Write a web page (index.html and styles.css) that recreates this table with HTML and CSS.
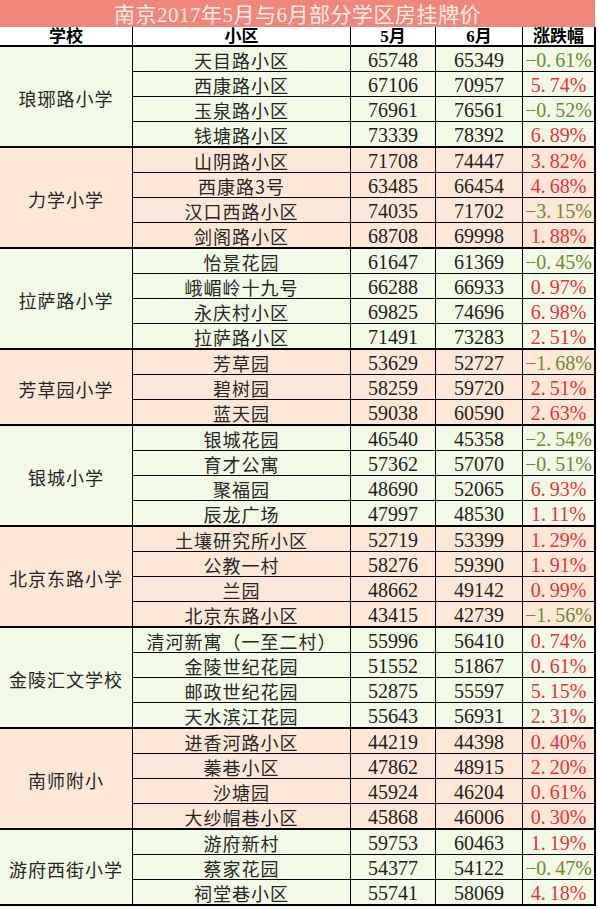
FILE: index.html
```html
<!DOCTYPE html>
<html lang="zh-CN">
<head>
<meta charset="utf-8">
<title>南京2017年5月与6月部分学区房挂牌价</title>
<link rel="stylesheet" href="styles.css">
</head>
<body>
<div class="sheet">
  <div class="title">南京2017年5月与6月部分学区房挂牌价</div>
  <div class="hd">学校</div><div class="hd">小区</div><div class="hd">5月</div><div class="hd">6月</div><div class="hd">涨跌幅</div>

  <section class="grp green">
    <div class="school">琅琊路小学</div>
    <div class="row"><span class="area">天目路小区</span><span>65748</span><span>65349</span><span class="pct dn">−0<i>.</i>61%</span></div>
    <div class="row"><span class="area">西康路小区</span><span>67106</span><span>70957</span><span class="pct up">5<i>.</i>74%</span></div>
    <div class="row"><span class="area">玉泉路小区</span><span>76961</span><span>76561</span><span class="pct dn">−0<i>.</i>52%</span></div>
    <div class="row"><span class="area">钱塘路小区</span><span>73339</span><span>78392</span><span class="pct up">6<i>.</i>89%</span></div>
  </section>

  <section class="grp peach">
    <div class="school">力学小学</div>
    <div class="row"><span class="area">山阴路小区</span><span>71708</span><span>74447</span><span class="pct up">3<i>.</i>82%</span></div>
    <div class="row"><span class="area">西康路3号</span><span>63485</span><span>66454</span><span class="pct up">4<i>.</i>68%</span></div>
    <div class="row"><span class="area">汉口西路小区</span><span>74035</span><span>71702</span><span class="pct dn">−3<i>.</i>15%</span></div>
    <div class="row"><span class="area">剑阁路小区</span><span>68708</span><span>69998</span><span class="pct up">1<i>.</i>88%</span></div>
  </section>

  <section class="grp green">
    <div class="school">拉萨路小学</div>
    <div class="row"><span class="area">怡景花园</span><span>61647</span><span>61369</span><span class="pct dn">−0<i>.</i>45%</span></div>
    <div class="row"><span class="area">峨嵋岭十九号</span><span>66288</span><span>66933</span><span class="pct up">0<i>.</i>97%</span></div>
    <div class="row"><span class="area">永庆村小区</span><span>69825</span><span>74696</span><span class="pct up">6<i>.</i>98%</span></div>
    <div class="row"><span class="area">拉萨路小区</span><span>71491</span><span>73283</span><span class="pct up">2<i>.</i>51%</span></div>
  </section>

  <section class="grp peach three">
    <div class="school">芳草园小学</div>
    <div class="row"><span class="area">芳草园</span><span>53629</span><span>52727</span><span class="pct dn">−1<i>.</i>68%</span></div>
    <div class="row"><span class="area">碧树园</span><span>58259</span><span>59720</span><span class="pct up">2<i>.</i>51%</span></div>
    <div class="row"><span class="area">蓝天园</span><span>59038</span><span>60590</span><span class="pct up">2<i>.</i>63%</span></div>
  </section>

  <section class="grp green">
    <div class="school">银城小学</div>
    <div class="row"><span class="area">银城花园</span><span>46540</span><span>45358</span><span class="pct dn">−2<i>.</i>54%</span></div>
    <div class="row"><span class="area">育才公寓</span><span>57362</span><span>57070</span><span class="pct dn">−0<i>.</i>51%</span></div>
    <div class="row"><span class="area">聚福园</span><span>48690</span><span>52065</span><span class="pct up">6<i>.</i>93%</span></div>
    <div class="row"><span class="area">辰龙广场</span><span>47997</span><span>48530</span><span class="pct up">1<i>.</i>11%</span></div>
  </section>

  <section class="grp peach">
    <div class="school">北京东路小学</div>
    <div class="row"><span class="area">土壤研究所小区</span><span>52719</span><span>53399</span><span class="pct up">1<i>.</i>29%</span></div>
    <div class="row"><span class="area">公教一村</span><span>58276</span><span>59390</span><span class="pct up">1<i>.</i>91%</span></div>
    <div class="row"><span class="area">兰园</span><span>48662</span><span>49142</span><span class="pct up">0<i>.</i>99%</span></div>
    <div class="row"><span class="area">北京东路小区</span><span>43415</span><span>42739</span><span class="pct dn">−1<i>.</i>56%</span></div>
  </section>

  <section class="grp green">
    <div class="school">金陵汇文学校</div>
    <div class="row"><span class="area">清河新寓（一至二村）</span><span>55996</span><span>56410</span><span class="pct up">0<i>.</i>74%</span></div>
    <div class="row"><span class="area">金陵世纪花园</span><span>51552</span><span>51867</span><span class="pct up">0<i>.</i>61%</span></div>
    <div class="row"><span class="area">邮政世纪花园</span><span>52875</span><span>55597</span><span class="pct up">5<i>.</i>15%</span></div>
    <div class="row"><span class="area">天水滨江花园</span><span>55643</span><span>56931</span><span class="pct up">2<i>.</i>31%</span></div>
  </section>

  <section class="grp peach">
    <div class="school">南师附小</div>
    <div class="row"><span class="area">进香河路小区</span><span>44219</span><span>44398</span><span class="pct up">0<i>.</i>40%</span></div>
    <div class="row"><span class="area">蓁巷小区</span><span>47862</span><span>48915</span><span class="pct up">2<i>.</i>20%</span></div>
    <div class="row"><span class="area">沙塘园</span><span>45924</span><span>46204</span><span class="pct up">0<i>.</i>61%</span></div>
    <div class="row"><span class="area">大纱帽巷小区</span><span>45868</span><span>46006</span><span class="pct up">0<i>.</i>30%</span></div>
  </section>

  <section class="grp green three">
    <div class="school">游府西街小学</div>
    <div class="row"><span class="area">游府新村</span><span>59753</span><span>60463</span><span class="pct up">1<i>.</i>19%</span></div>
    <div class="row"><span class="area">蔡家花园</span><span>54377</span><span>54122</span><span class="pct dn">−0<i>.</i>47%</span></div>
    <div class="row"><span class="area">祠堂巷小区</span><span>55741</span><span>58069</span><span class="pct up">4<i>.</i>18%</span></div>
  </section>
</div>
</body>
</html>
```

FILE: styles.css
```css
* {
  box-sizing: border-box;
  margin: 0;
  padding: 0;
}

body {
  background: #ffffff;
  color: #1e1e1e;
  font-family: "Liberation Serif", "Noto Sans CJK SC", serif;
}

.sheet {
  display: grid;
  grid-template-columns: 133px 218px 85px 87px 73px;
  width: 596px;
}

.title {
  grid-column: 1 / -1;
  height: 27px;
  margin-right: 1px;
  padding-top: 4px;
  background: #f1867a;
  color: #fdeeea;
  font-size: 21px;
  line-height: 23px;
  letter-spacing: 0.5px;
  text-align: center;
}

.hd {
  height: 20px;
  padding-top: 1px;
  background: #ffffff;
  border-right: 1px solid #000;
  border-bottom: 2px solid #000;
  color: #000;
  font-size: 17px;
  font-weight: 700;
  line-height: 17px;
  text-align: center;
}

.hd:last-child,
.hd:nth-child(6) {
  border-right-width: 2px;
}

.grp,
.row {
  display: contents;
}

.school {
  grid-column: 1;
  grid-row: span 4;
  display: flex;
  align-items: center;
  justify-content: center;
  padding-top: 3px;
  border-right: 1px solid #000;
  border-bottom: 2px solid #000;
  font-family: "Noto Sans CJK SC", sans-serif;
  font-size: 18px;
  letter-spacing: 1px;
  color: #262626;
}

.three .school {
  grid-row: span 3;
}

.row > span {
  display: block;
  height: 25px;
  padding-top: 2px;
  border-right: 1px solid #000;
  border-bottom: 1px solid #000;
  font-size: 20px;
  line-height: 22px;
  text-align: center;
  white-space: nowrap;
}

.row:last-child > span {
  height: 26px;
  border-bottom-width: 2px;
}

.row > span:last-child {
  border-right-width: 2px;
}

.row > .area {
  font-family: "Noto Sans CJK SC", sans-serif;
  font-size: 18px;
  letter-spacing: 1px;
  color: #262626;
}

.green .school,
.green .row > span {
  background: #f3f9e7;
}

.peach .school,
.peach .row > span {
  background: #fde8d8;
}

.pct i {
  display: inline-block;
  width: 9px;
  font-style: normal;
  text-align: left;
}

.up {
  color: #e8313a;
}

.dn {
  color: #6f8a35;
}
```
